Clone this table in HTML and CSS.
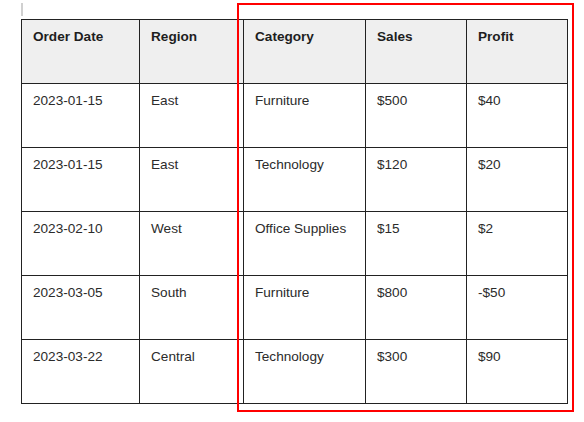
FILE: index.html
```html
<!DOCTYPE html>
<html>
<head>
<meta charset="utf-8">
<link rel="stylesheet" href="styles.css">
</head>
<body>
<div class="page">
  <div class="caret"></div>
  <table class="data">
    <colgroup>
      <col class="c1"><col class="c2"><col class="c3"><col class="c4"><col class="c5">
    </colgroup>
    <thead>
      <tr><th>Order Date</th><th>Region</th><th>Category</th><th>Sales</th><th>Profit</th></tr>
    </thead>
    <tbody>
      <tr><td>2023-01-15</td><td>East</td><td>Furniture</td><td>$500</td><td>$40</td></tr>
      <tr><td>2023-01-15</td><td>East</td><td>Technology</td><td>$120</td><td>$20</td></tr>
      <tr><td>2023-02-10</td><td>West</td><td>Office Supplies</td><td>$15</td><td>$2</td></tr>
      <tr><td>2023-03-05</td><td>South</td><td>Furniture</td><td>$800</td><td>-$50</td></tr>
      <tr><td>2023-03-22</td><td>Central</td><td>Technology</td><td>$300</td><td>$90</td></tr>
    </tbody>
  </table>
  <div class="highlight"></div>
</div>
</body>
</html>
```

FILE: styles.css
```css
html, body {
  margin: 0;
  padding: 0;
  background: #fff;
}
.page {
  position: relative;
  min-height: 422px;
  box-sizing: border-box;
  padding: 3px 0 0 21px;
  font-family: "Liberation Sans", Arial, sans-serif;
  font-size: 13.6px;
  color: #2b2b2b;
}
.caret {
  width: 2px;
  height: 13px;
  background: #d0d0d0;
  margin-bottom: 3px;
}
.data {
  border-collapse: collapse;
  table-layout: fixed;
  width: 547px;
}
.c1 { width: 118px; }
.c2 { width: 104px; }
.c3 { width: 122px; }
.c4 { width: 101px; }
.c5 { width: 101px; }
.data th, .data td {
  border: 1px solid #222;
  padding: 9px 11px 10px;
  height: 43px;
  text-align: left;
  vertical-align: top;
  box-sizing: border-box;
}
.data th {
  background: #efefef;
  font-weight: bold;
  color: #1e1e1e;
}
.data tr {
  height: 64px;
}
.highlight {
  position: absolute;
  left: 237px;
  top: 3px;
  width: 337px;
  height: 409px;
  border: 2px solid #ff0000;
  box-sizing: border-box;
}
```
